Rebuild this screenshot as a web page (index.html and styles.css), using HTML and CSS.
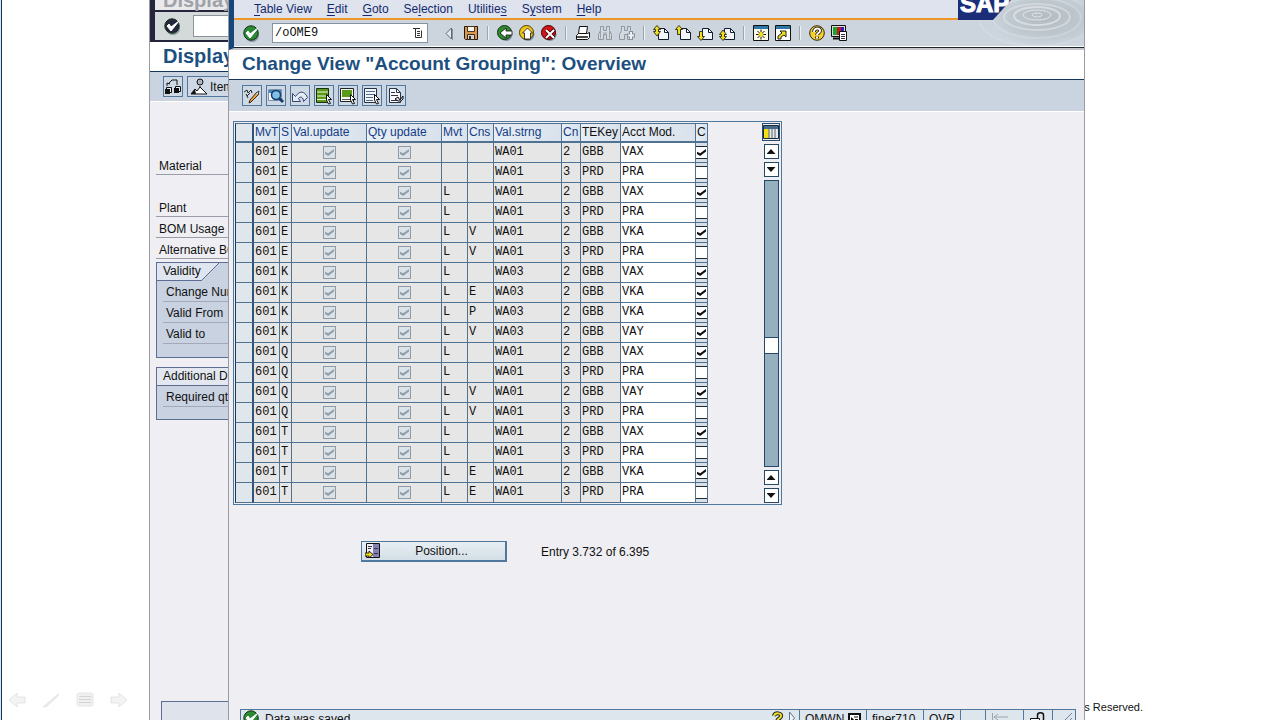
FILE: index.html
```html
<!DOCTYPE html>
<html lang="en">
<head>
<meta charset="utf-8">
<title>Change View "Account Grouping": Overview</title>
<link rel="stylesheet" href="styles.css">
</head>
<body>
<svg class="defs" aria-hidden="true">
  <symbol id="ok" viewBox="0 0 17 17"><circle cx="9" cy="10" r="7" fill="#8793a0"/><circle cx="8" cy="8" r="7.2" fill="currentColor" stroke="#163016"/><path d="M3 8l4 5 8-10-8 6-2-3z" fill="#fff" stroke="#fff" stroke-width="1"/></symbol>
  <symbol id="prev" viewBox="0 0 16 16"><path d="M10.500 3v11L5 8.500z" fill="#e4e9ee" stroke="#5f6870"/><path d="M11.500 4v11" stroke="#8b949c"/></symbol>
  <symbol id="save" viewBox="0 0 16 16"><path d="M1.500 1.500h13v13h-12l-1-1z" fill="#d9984e" stroke="#20160c"/><path d="M4.500 1.500h7v5h-7z" fill="#f8f4ee" stroke="#4a3520"/><path d="M4.500 9.500h7v5h-7z" fill="#d4d0cc" stroke="#3a2a1a"/><path d="M6 11h2v3H6z" fill="#333"/></symbol>
  <symbol id="back" viewBox="0 0 16 16"><circle cx="9" cy="9.500" r="6.500" fill="#808aa0"/><circle cx="7.500" cy="7.500" r="7" fill="#2e8b2e" stroke="#113311"/><path d="M3 8l6-5v3h6v4H9v3z" fill="#fff" stroke="#111" stroke-width=".8"/></symbol>
  <symbol id="exit" viewBox="0 0 16 16"><circle cx="9" cy="9.500" r="6.500" fill="#808aa0"/><circle cx="7.500" cy="7.500" r="7" fill="#f2c818" stroke="#4a3a08"/><path d="M8.500 3l5 5h-2v6h-6V8h-2z" fill="#fff" stroke="#111" stroke-width=".8"/></symbol>
  <symbol id="cancel" viewBox="0 0 16 16"><circle cx="9" cy="9.500" r="6.500" fill="#808aa0"/><circle cx="7.500" cy="7.500" r="7" fill="#d41418" stroke="#400"/><path d="M5 5l8 8M13 5l-8 8" stroke="#300" stroke-width="3.500"/><path d="M5 5l8 8M13 5l-8 8" stroke="#fff" stroke-width="2"/></symbol>
  <symbol id="print" viewBox="0 0 16 16"><path d="M4.500 1.500h8l-1 7h-8z" fill="#fff" stroke="#111"/><path d="M1.500 10.500l2-2h9l2-1v5l-2 2h-11z" fill="#fff" stroke="#111"/><path d="M2 12h11" stroke="#111" stroke-width="1.500"/></symbol>
  <symbol id="find" viewBox="0 0 16 16"><path d="M3.500 1.500h3v4h3v-4h3v4l2 4v5h-5v-5h-3v5h-5v-5l2-4z" fill="#d5dade" stroke="#8e979f"/><path d="M3.500 5.500v8M12.500 5.500v8M6 8h4" stroke="#9aa2a9"/></symbol>
  <symbol id="findnext" viewBox="0 0 16 16"><path d="M2.500 1.500h3v4h3v-4h3v4l2 4v5h-5v-5h-3v5h-5v-5l2-4z" fill="#d5dade" stroke="#8e979f"/><path d="M12 6v9M8 10.500h8" stroke="#88919a" stroke-width="4"/><path d="M12 7v7M9 10.500h6" stroke="#eef1f4" stroke-width="2"/></symbol>
  <symbol id="page" viewBox="0 0 16 16"><path d="M5.500 3.500h6l4 4v7h-10z" fill="#f3f6fb" stroke="#151c30"/><path d="M11.500 3.500v4h4" fill="none" stroke="#151c30"/></symbol>
  <symbol id="first" viewBox="0 0 16 16"><use href="#page"/><path d="M4 .5l3.500 4H5.500v2h2L4 11 .5 6.500h2v-2h-2z" fill="#f1df1d" stroke="#111" stroke-width=".8"/></symbol>
  <symbol id="pgup" viewBox="0 0 16 16"><use href="#page"/><path d="M4 .5l3.500 4H5.500v5h-3v-5h-2z" fill="#f1df1d" stroke="#111" stroke-width=".8"/></symbol>
  <symbol id="pgdn" viewBox="0 0 16 16"><use href="#page"/><path d="M4 15.500l3.500-4H5.500v-5h-3v5h-2z" fill="#f1df1d" stroke="#111" stroke-width=".8"/></symbol>
  <symbol id="last" viewBox="0 0 16 16"><use href="#page"/><path d="M4 15.500l3.500-4H5.500v-2h2L4 5 .5 9.500h2v2h-2z" fill="#f1df1d" stroke="#111" stroke-width=".8"/></symbol>
  <symbol id="session" viewBox="0 0 16 16"><path d="M.5.500h15v15H.5z" fill="#fbfbe8" stroke="#111"/><path d="M1 1h14v3H1z" fill="#2d76a8"/><path d="M8 4.500v10M3 9.500h10M4.500 6l7 7M11.500 6l-7 7" stroke="#111"/><path d="M8 7v5M5.500 9.500h5" stroke="#f1df1d" stroke-width="2"/></symbol>
  <symbol id="shortcut" viewBox="0 0 16 16"><path d="M.5.500h15v15H.5z" fill="#fff" stroke="#111"/><path d="M1 1h14v3H1z" fill="#2d76a8"/><path d="M3 14v-3l4-3-2-2h6v6l-2-2-3 2v2z" fill="#f1df1d" stroke="#111" stroke-width=".9"/></symbol>
  <symbol id="help" viewBox="0 0 16 16"><circle cx="8" cy="8" r="7.300" fill="#f4d030" stroke="#33280a"/><path d="M5 7c0-5 7-4 6-1 0 2-3 2-3 4M8 11.500v2" fill="none" stroke="#111" stroke-width="3.600"/><path d="M5 7c0-5 7-4 6-1 0 2-3 2-3 4M8 11.500v2" fill="none" stroke="#fff" stroke-width="1.900"/></symbol>
  <symbol id="layout" viewBox="0 0 16 16"><path d="M.5.500h14v11H.5z" fill="#ddd" stroke="#111"/><path d="M2 2h4v8H2z" fill="#19a62e"/><path d="M6 2h4v8H6z" fill="#cf1616"/><path d="M10 2h3v8h-3z" fill="#2424bd"/><path d="M2 13.500h7" stroke="#111" stroke-width="2"/><path d="M8.500 6.500h7v9h-7z" fill="#fff" stroke="#111"/><path d="M10 9.500h4M10 11.500h4M10 13.500h4" stroke="#333"/></symbol>
  <symbol id="toggle" viewBox="0 0 18 18"><path d="M1 5l3-2 1 3 3-3 1 3" fill="none" stroke="#222"/><path d="M4 9l3-3M3 7l2 4" stroke="#222"/><path d="M8 15l-2 1 1-3 7-8 2 2z" fill="#efa541" stroke="#35240c"/><path d="M13 6l3-2-1 4" fill="#fff" stroke="#333"/></symbol>
  <symbol id="details" viewBox="0 0 18 18"><path d="M1.500 2.500h13v11h-13z" fill="#f8fbff" stroke="#7f93ad"/><path d="M2 3h12v3H2z" fill="#4286ba"/><circle cx="9" cy="8" r="4.500" fill="#7fbfe8" stroke="#163b68" stroke-width="1.500"/><path d="M12 11l4 4" stroke="#163b68" stroke-width="3"/></symbol>
  <symbol id="undo" viewBox="0 0 18 18"><path d="M1.500 14.500v-8l3 3c4-6 9-6 12 1l-4 4c0-4-3-6-5-3l2 3z" fill="#e4ebf5" stroke="#34446c"/></symbol>
  <symbol id="cursor" viewBox="0 0 18 18"><path d="M11.500 7.500l5 5h-3l2 4-2 .5-2-4z" fill="#fff" stroke="#111"/></symbol>
  <symbol id="selall" viewBox="0 0 18 18"><path d="M1.500 1.500h12v14h-12z" fill="#5b9a18" stroke="#1b3010"/><path d="M2 5h11M2 9h11M2 12.500h11" stroke="#eff5d9" stroke-width="1"/><use href="#cursor"/></symbol>
  <symbol id="selblock" viewBox="0 0 18 18"><path d="M1.500 1.500h13v13h-13z" fill="#f5f5f3" stroke="#222"/><path d="M3 3h10v7H3z" fill="#5b9a18"/><path d="M3 12.500h8" stroke="#555"/><use href="#cursor"/></symbol>
  <symbol id="deselect" viewBox="0 0 18 18"><path d="M1.500 1.500h12v14h-12z" fill="#f2f5f9" stroke="#263044"/><path d="M3 4.500h9M3 7.500h9M3 10.500h7M3 13.500h7" stroke="#536a8e"/><use href="#cursor"/></symbol>
  <symbol id="config" viewBox="0 0 18 18"><path d="M2.500 1.500h7l4 4v10h-11z" fill="#f7f9fc" stroke="#263044"/><path d="M9.500 1.500v4h4M4 5.500h4M4 8.500h7M4 13.500h6" fill="none" stroke="#334"/><path d="M8 12l3-2 2 3 3-4v3l-2 2h-3z" fill="#dde" stroke="#111"/></symbol>
  <symbol id="chain" viewBox="0 0 18 18"><path d="M2.500 9.500h5v5h-5zM11.500 8.500h5v5h-5z" fill="#eee" stroke="#111"/><path d="M1 11h5v5H1zM10 10h5v5h-5z" fill="#111"/><path d="M3 8V5l3 1M5 5l3-3h5v5" fill="none" stroke="#111"/></symbol>
  <symbol id="mountain" viewBox="0 0 18 18"><circle cx="10" cy="4" r="3" fill="#aeb6bd" stroke="#111"/><path d="M10 8v3" stroke="#111"/><path d="M1 16l4-5 2 2 3-4 7 7z" fill="#fff" stroke="#111"/><path d="M1 16l4-5 1 5z" fill="#111"/></symbol>
  <symbol id="columns" viewBox="0 0 16 16"><path d="M.5 1.500h15v13H.5z" fill="#e8eaee" stroke="#1c2a3a"/><path d="M1 2h14v3H1z" fill="#3f6d92"/><path d="M1 5h5v9H1z" fill="#f6df10"/><path d="M6 2v12M9 2v12M12 2v12" stroke="#59636c"/></symbol>
  <symbol id="position" viewBox="0 0 16 16"><path d="M1.500.500h13v14h-13z" fill="#eef0f5" stroke="#111"/><path d="M8 1h6v13H8z" fill="#8480b5"/><path d="M3 3.500h4M3 5.500h3M9 5.500h4M9 10.500h4" stroke="#334"/><path d="M0 10h4V8l4 3.500L4 15v-2H0z" fill="#f1df1d" stroke="#111" stroke-width=".9"/></symbol>
</svg>

<main class="desktop">
  <nav class="slide-nav" aria-label="Slides">
    <button aria-label="Previous"><svg viewBox="0 0 18 18"><path d="M1 9l8-7v4h8v6H9v4z" fill="#f3f3f3" stroke="#e4e4e4"/></svg></button>
    <button aria-label="Pen"><svg viewBox="0 0 18 18"><path d="M1 16L15 4l2-1-3 4-9 8z" fill="#ececec" stroke="#e6e6e6"/></svg></button>
    <button aria-label="Menu"><svg viewBox="0 0 18 18"><rect x="1" y="2" width="16" height="13" rx="2" fill="#f0f0f0" stroke="#e6e6e6"/><path d="M3 5.500h12M3 8.500h12M3 11.500h12" stroke="#d4d4d4"/></svg></button>
    <button aria-label="Next"><svg viewBox="0 0 18 18"><path d="M17 9L9 2v4H1v6h8v4z" fill="#f3f3f3" stroke="#e4e4e4"/></svg></button>
  </nav>
  <p class="rights">s Reserved.</p>

  <section class="window back-window">
    <div class="ghost-title">Display</div>
    <div class="back-bar"><svg class="ok dark"><use href="#ok"/></svg><input class="back-command" aria-label="Command"></div>
    <h2 class="title">Display</h2>
    <div class="app-bar back-app">
      <button class="tool" aria-label="Assembly"><svg><use href="#chain"/></svg></button>
      <button class="tool item"><svg><use href="#mountain"/></svg>Item</button>
    </div>
    <div class="fields">
      <div class="field material">Material</div>
      <div class="field">Plant</div>
      <div class="field">BOM Usage</div>
      <div class="field">Alternative BOM</div>
    </div>
    <div class="group validity">
      <div class="group-head"><span class="tab">Validity</span><svg class="slant" viewBox="0 0 18 18"><path d="M0 0h18L0 18z" fill="#dfe6ef"/><path d="M0 18L18 0" stroke="#5e6d93"/></svg></div>
      <div class="field">Change Number</div><div class="field">Valid From</div><div class="field">Valid to</div>
    </div>
    <div class="group extra">
      <div class="group-head full"><span class="tab">Additional Data</span></div>
      <div class="field">Required qty</div>
    </div>
    <div class="back-status"></div>
  </section>

  <section class="window front-window">
    <header class="top">
      <div class="bars">
        <nav class="menu">
          <button><u>T</u>able View</button><button><u>E</u>dit</button><button><u>G</u>oto</button><button>Se<u>l</u>ection</button><button>Utilitie<u>s</u></button><button>S<u>y</u>stem</button><button><u>H</u>elp</button>
        </nav>
        <div class="toolbar">
          <button class="icon" aria-label="Enter"><svg class="ok"><use href="#ok"/></svg></button>
          <div class="command">
            <input aria-label="Command field" value="/oOME9">
            <svg viewBox="0 0 10 12"><path d="M0 1.500h7M2.500 1.500v9h6v-7M4 4.500h3M4 6.500h3M4 8.500h3" fill="none" stroke="#333"/></svg>
          </div>
          <button class="icon" aria-label="Previous command"><svg><use href="#prev"/></svg></button>
          <button class="icon" aria-label="Save"><svg><use href="#save"/></svg></button>
          <span class="sep"></span>
          <button class="icon" aria-label="Back"><svg><use href="#back"/></svg></button>
          <button class="icon" aria-label="Exit"><svg><use href="#exit"/></svg></button>
          <button class="icon" aria-label="Cancel"><svg><use href="#cancel"/></svg></button>
          <span class="sep"></span>
          <button class="icon" aria-label="Print"><svg><use href="#print"/></svg></button>
          <button class="icon" aria-label="Find"><svg><use href="#find"/></svg></button>
          <button class="icon" aria-label="Find next"><svg><use href="#findnext"/></svg></button>
          <span class="sep"></span>
          <button class="icon" aria-label="First page"><svg><use href="#first"/></svg></button>
          <button class="icon" aria-label="Page up"><svg><use href="#pgup"/></svg></button>
          <button class="icon" aria-label="Page down"><svg><use href="#pgdn"/></svg></button>
          <button class="icon" aria-label="Last page"><svg><use href="#last"/></svg></button>
          <span class="sep"></span>
          <button class="icon" aria-label="New session"><svg><use href="#session"/></svg></button>
          <button class="icon" aria-label="Shortcut"><svg><use href="#shortcut"/></svg></button>
          <span class="sep"></span>
          <button class="icon" aria-label="Help"><svg><use href="#help"/></svg></button>
          <button class="icon" aria-label="Layout"><svg><use href="#layout"/></svg></button>
        </div>
      </div>
      <div class="brand">
        <svg viewBox="0 0 126 46">
          <defs>
            <radialGradient id="water" cx=".6" cy=".4" r=".6"><stop offset="0" stop-color="#b4bcc2"/><stop offset=".6" stop-color="#bec7cd"/><stop offset="1" stop-color="#ccd5de"/></radialGradient>
          </defs>
          <rect width="126" height="46" fill="#ccd5de"/>
          <path d="M53 0h73v46H32l3-26z" fill="url(#water)"/>
          <g fill="none" stroke="#dfe4e8">
            <ellipse cx="79" cy="15" rx="5" ry="2"/><ellipse cx="79" cy="15" rx="14" ry="5"/><ellipse cx="79" cy="16" rx="23" ry="9" stroke-width="2" opacity=".8"/><ellipse cx="79" cy="17" rx="33" ry="13" stroke-width="2" opacity=".6"/><ellipse cx="79" cy="18" rx="44" ry="20" stroke-width="2" opacity=".4"/><ellipse cx="79" cy="20" rx="57" ry="26" stroke-width="2" opacity=".3"/>
          </g>
          <path d="M0 0h53L35 20H0z" fill="#1c2d78"/>
        </svg>
        <span class="sap">SAP</span>
      </div>
    </header>
    <h1 class="title">Change View "Account Grouping": Overview</h1>
    <div class="app-bar">
      <button class="tool" aria-label="Display/Change"><svg><use href="#toggle"/></svg></button>
      <button class="tool" aria-label="Details"><svg><use href="#details"/></svg></button>
      <button class="tool" aria-label="Undo"><svg><use href="#undo"/></svg></button>
      <button class="tool" aria-label="Select all"><svg><use href="#selall"/></svg></button>
      <button class="tool" aria-label="Select block"><svg><use href="#selblock"/></svg></button>
      <button class="tool" aria-label="Deselect all"><svg><use href="#deselect"/></svg></button>
      <button class="tool" aria-label="Configuration help"><svg><use href="#config"/></svg></button>
    </div>
    <div class="content">
      <div class="grid-frame">
        <table>
          <colgroup><col class="w19"><col class="w26"><col class="w12"><col class="w75"><col class="w75"><col class="w26"><col class="w26"><col class="w68"><col class="w19"><col class="w40"><col class="w75"><col class="w12"></colgroup>
          <thead><tr><th class="sel"></th><th>MvT</th><th>S</th><th>Val.update</th><th>Qty update</th><th>Mvt</th><th>Cns</th><th>Val.strng</th><th>Cn</th><th class="key">TEKey</th><th class="key">Acct Mod.</th><th class="key">C</th></tr></thead>
          <tbody id="rows"></tbody>
        </table>
        <div class="scroll">
          <button class="columns" aria-label="Table settings"><svg><use href="#columns"/></svg></button>
          <button class="arrow up" aria-label="Scroll to top"></button>
          <button class="arrow down" aria-label="Scroll down"></button>
          <div class="track"><div class="before"></div><div class="thumb"></div><div class="after"></div></div>
          <button class="arrow up" aria-label="Scroll up"></button>
          <button class="arrow down" aria-label="Scroll to end"></button>
        </div>
      </div>
      <div class="position-row">
        <button class="position"><svg><use href="#position"/></svg><span>Position...</span></button>
        <span>Entry 3.732 of 6.395</span>
      </div>
    </div>
    <footer class="status">
      <svg class="ok"><use href="#ok"/></svg><span class="message">Data was saved</span>
      <svg class="hint" viewBox="0 0 24 16"><path d="M3 6c1-4 8-3 7 0 0 3-4 2-4 6" fill="none" stroke="#222" stroke-width="4"/><path d="M3 6c1-4 8-3 7 0 0 3-4 2-4 6" fill="none" stroke="#eee02a" stroke-width="2"/><path d="M18.500 2v12l5-6z" fill="#edf2f7" stroke="#5c7690"/></svg>
      <span class="cell c67">OMWN <svg viewBox="0 0 13 13"><path d="M1 1h11v11H1z" fill="#fff" stroke="#111" stroke-width="2"/><path d="M3 4l3 2.500L3 9z" fill="#111"/><path d="M6 4h4M7 6.500h3M6 9h4" stroke="#111"/></svg></span>
      <span class="cell c57">finer710</span><span class="cell c37">OVR</span><span class="cell c25"></span>
      <span class="cell c38"><svg class="wide" viewBox="0 0 18 16"><path d="M1.500 2v10M3 6h14M3 6l4-3M3 6l4 3" fill="none" stroke="#9aa3ab"/></svg></span>
      <span class="cell c29"><svg class="wide" viewBox="0 0 18 16"><path d="M8.500 7V4c0-3 6-3 6 0v5" fill="none" stroke="#111" stroke-width="1.500"/><path d="M1.500 7.500h9v6h-9z" fill="#fff" stroke="#111"/></svg></span>
      <span class="cell grip"><svg class="wide" viewBox="0 0 18 16"><path d="M4 14L16 2M9 14l7-7M13 14l3-3" stroke="#6f8499"/></svg></span>
    </footer>
  </section>
</main>
<script src="app.js"></script>
</body>
</html>
```
FILE: app.js
```js
// stock indicator, movement, consumption, value string, counter, key, modifier, check
const entries = `E|||WA01|2|GBB|VAX|1
E|||WA01|3|PRD|PRA|
E|L||WA01|2|GBB|VAX|1
E|L||WA01|3|PRD|PRA|
E|L|V|WA01|2|GBB|VKA|1
E|L|V|WA01|3|PRD|PRA|
K|L||WA03|2|GBB|VAX|1
K|L|E|WA03|2|GBB|VKA|1
K|L|P|WA03|2|GBB|VKA|1
K|L|V|WA03|2|GBB|VAY|1
Q|L||WA01|2|GBB|VAX|1
Q|L||WA01|3|PRD|PRA|
Q|L|V|WA01|2|GBB|VAY|1
Q|L|V|WA01|3|PRD|PRA|
T|L||WA01|2|GBB|VAX|1
T|L||WA01|3|PRD|PRA|
T|L|E|WA01|2|GBB|VKA|1
T|L|E|WA01|3|PRD|PRA|`.split('\n').map(line => line.split('|'));

const locked = label => `<td class="mid"><input type="checkbox" class="locked" aria-label="${label}" checked disabled></td>`;

document.getElementById('rows').innerHTML = entries.map(([s, mvt, cns, str, cn, key, mod, check]) =>
  `<tr><td class="sel"></td><td>601</td><td>${s}</td>${locked('Val.update')}${locked('Qty update')}` +
  `<td>${mvt}</td><td>${cns}</td><td>${str}</td><td>${cn}</td><td>${key}</td><td class="edit">${mod}</td>` +
  `<td class="chk"><input type="checkbox" class="open" aria-label="C" ${check ? 'checked' : ''}></td></tr>`).join('');
```
FILE: styles.css
```css
* { box-sizing: border-box; }
body { margin: 0; background: #fff; font: 12px/16px "Liberation Sans", Arial, sans-serif; color: #111; }
button, input { font: inherit; color: inherit; margin: 0; }
button { background: none; border: 0; padding: 0; }
svg { display: block; flex: none; width: 16px; height: 16px; }
.defs { position: absolute; width: 0; height: 0; }
.desktop { position: relative; height: 100vh; overflow: hidden; border-left: 1px solid #d7e4f2; }
.desktop::before { content: ""; position: absolute; left: 0; top: 0; bottom: 0; width: 1px; background: #17365f; }

.slide-nav { position: absolute; left: 7px; bottom: 11px; display: flex; gap: 16px; }
.slide-nav svg { width: 18px; height: 18px; }
.rights { position: absolute; right: 137px; bottom: 5px; margin: 0; font-size: 11px; }

.window { position: absolute; top: 0; right: 195px; bottom: -12px; display: flex; flex-direction: column; background: #eeeef3; overflow: hidden; }
.title { margin: 0; padding: 0 13px; height: 30px; flex: none; background: #fff; border-bottom: 1px solid #16375a; color: #1d4f80; font-size: 20px; line-height: 28px; font-weight: bold; white-space: nowrap; }
.front-window .title { font-size: 19px; }
.app-bar { display: flex; flex: none; align-items: center; gap: 4px; height: 32px; padding: 0 13px; background: #cad3e0; border-bottom: 1px solid #fff; }
.tool { display: flex; align-items: center; justify-content: center; width: 20px; height: 21px; border: 1px solid #52779c; background: #cfd9e6; }
.tool svg { width: 18px; height: 18px; }
.ok { width: 17px; height: 17px; color: #2b8a35; }
.ok.dark { color: #25283c; }

/* back window */
.back-window { left: 148px; border-left: 1px solid #9a9aa2; }
.ghost-title { height: 12px; flex: none; padding-left: 8px; border-left: 5px solid #25253c; border-bottom: 2px solid #25253c; background: #e9e9ec; color: #9fa2a8; font-size: 20px; font-weight: bold; line-height: 0; }
.back-bar { display: flex; flex: none; align-items: center; gap: 12px; height: 30px; padding-left: 9px; border-left: 5px solid #25253c; border-bottom: 2px solid #25253c; background: #d3dad9; }
.back-command { width: 160px; height: 22px; border: 1px solid #8b949c; background: #fff; }
.back-window .title + .app-bar { height: 30px; }
.tool.item { justify-content: flex-start; width: 60px; padding-left: 2px; gap: 2px; }
.field { height: 21px; padding: 4px 2px 0; line-height: 16px; border-bottom: 1px solid #9a9ca8; white-space: nowrap; }
.fields { padding: 52px 0 0 6px; flex: none; }
.fields .material { margin-bottom: 21px; }
.fields .field { padding-left: 3px; }
.group { flex: none; margin-left: 6px; border: 1px solid #5e6d93; background: #c9d2e0; }
.validity { margin-top: 3px; height: 96px; }
.extra { margin-top: 9px; height: 53px; }
.group .field { margin-left: 6px; padding: 3px 0 0 3px; border-color: #a3a9b8; }
.group-head { display: flex; height: 18px; }
.tab { padding: 0 0 0 6px; line-height: 16px; background: #dfe6ef; border-bottom: 1px solid #5e6d93; }
.slant { width: 18px; height: 18px; }
.full .tab { flex: 1; background: #e3e8f0; }
.back-status { flex: none; height: 31px; margin: auto 0 0 11px; border: 1px solid #5e6d93; background: #dfe3ec; }

/* front window */
.front-window { left: 227px; border-left: 1px solid #9a9aa2; border-right: 1px solid #9a9aa2; }
.top { display: flex; flex: none; height: 50px; border-left: 5px solid #17477a; border-bottom: 2px solid #c5c5cb; background: #ccd5de; box-shadow: inset 0 -1px #1b242c, inset 0 -2px #fff; }
.bars { flex: 1; min-width: 0; }
.menu { display: flex; gap: 15px; height: 20px; padding-left: 20px; background: #dee3ed; border-bottom: 2px solid #ee9626; color: #142a6e; }
.menu button { line-height: 17px; white-space: nowrap; }
.menu u { text-underline-offset: 2px; }
.toolbar { display: flex; align-items: center; gap: 6px; height: 26px; padding-left: 9px; }
.sep { width: 2px; height: 14px; margin: 0 2px; background: #9ba5ae; border-right: 1px solid #eef1f4; }
.command { display: flex; align-items: center; width: 156px; height: 20px; margin: 0 7px 0 6px; padding: 0 4px 0 0; background: #fff; border: 1px solid #8693a1; }
.command input { flex: 1; min-width: 0; height: 18px; padding: 0 2px; border: 0; background: none; font-family: "Liberation Mono", monospace; outline: 0; }
.command svg { width: 10px; height: 12px; }
.brand { position: relative; width: 126px; height: 46px; overflow: hidden; }
.brand svg { width: 126px; height: 46px; }
.sap { position: absolute; left: 2px; top: -9px; color: #fff; font-size: 24px; line-height: 26px; font-weight: bold; -webkit-text-stroke: 1px #fff; }

.content { flex: 1; padding: 9px 4px; }
.grid-frame { display: inline-flex; border: 1px solid #4f789c; padding: 1px; background: #eeeef3; }
table { table-layout: fixed; width: 473px; border-spacing: 0; margin-right: 54px; font-family: "Liberation Mono", monospace; }
.w12 { width: 12px; } .w19 { width: 19px; } .w26 { width: 26px; } .w40 { width: 40px; } .w68 { width: 68px; } .w75 { width: 75px; }
th, td { height: 20px; padding: 0 0 1px 1px; border-right: 1px solid #4f7292; border-bottom: 1px solid #4f7292; overflow: hidden; white-space: nowrap; text-align: left; vertical-align: top; line-height: 18px; background: #e6e6e6; }
th { padding-bottom: 0; border-top: 1px solid #4f7292; border-bottom-width: 2px; background: linear-gradient(90deg, #e7eef5, #d9e2ec); color: #143c86; font: 12px/17px "Liberation Sans", Arial, sans-serif; }
th.key { color: #111; }
.sel { background: #dfe7ed; border-left: 1px solid #17395c; border-right: 2px solid #2f5379; }
td.edit { background: #fff; }
td.chk { background: #d9dfe7; padding: 0; }
input[type=checkbox] { appearance: none; display: block; position: relative; }
input[type=checkbox]:checked::before { content: ""; position: absolute; inset: 2px 1px; background: #111; clip-path: polygon(0 40%, 0 70%, 35% 100%, 100% 35%, 100% 0, 35% 62%); }
input.locked { width: 13px; height: 13px; margin: 3px auto 0; border: 1px solid #8e9ba6; background: #dbe3e8; }
input.locked:checked::before { background: #93a0ab; }
input.open { width: 11px; height: 13px; margin-top: 3px; border: solid #1e2a36; border-width: 1px 0; background: #fff; }
.scroll { display: flex; flex-direction: column; align-items: center; gap: 3px; width: 18px; }
.columns { width: 18px; height: 18px; border: 1px solid #284d70; }
.arrow { display: flex; align-items: center; justify-content: center; flex: none; width: 15px; height: 15px; background: #fff; border: 1px solid #254866; }
.arrow::before { content: ""; width: 9px; height: 5px; background: #111; clip-path: polygon(50% 0, 100% 100%, 0 100%); }
.arrow.down::before { clip-path: polygon(0 0, 100% 0, 50% 100%); }
.track { flex: 1; display: flex; flex-direction: column; width: 15px; border: 1px solid #254866; background: #96b0c0; }
.before { flex: 157; } .after { flex: 112; }
.thumb { height: 17px; background: #fff; border: solid #254866; border-width: 1px 0; }
.position-row { display: flex; align-items: center; gap: 34px; margin: 36px 0 0 128px; }
.position { display: flex; align-items: center; width: 146px; height: 21px; padding: 0 3px; border: 1px solid #4f789c; border-bottom-width: 2px; border-right-width: 2px; background: linear-gradient(#e8eff4, #d3dee6); }
.position span { flex: 1; text-align: center; }

.status { display: flex; flex: none; align-items: stretch; height: 20px; margin: 0 8px 3px 11px; border: 1px solid #4f789c; background: #dee6ed; line-height: 18px; }
.status > .ok { margin: 0 5px 0 2px; }
.message { flex: 1; }
.hint { width: 24px; height: 16px; margin-right: 4px; }
.cell { display: flex; align-items: center; gap: 4px; padding-left: 5px; border-left: 1px solid #4f789c; }
.cell svg { width: 13px; height: 13px; }
.cell .wide { width: 18px; height: 16px; }
.c67 { width: 67px; } .c57 { width: 57px; } .c37 { width: 37px; } .c25 { width: 25px; } .c38 { width: 38px; } .c29 { width: 29px; } .grip { width: 23px; padding-left: 3px; }
```
